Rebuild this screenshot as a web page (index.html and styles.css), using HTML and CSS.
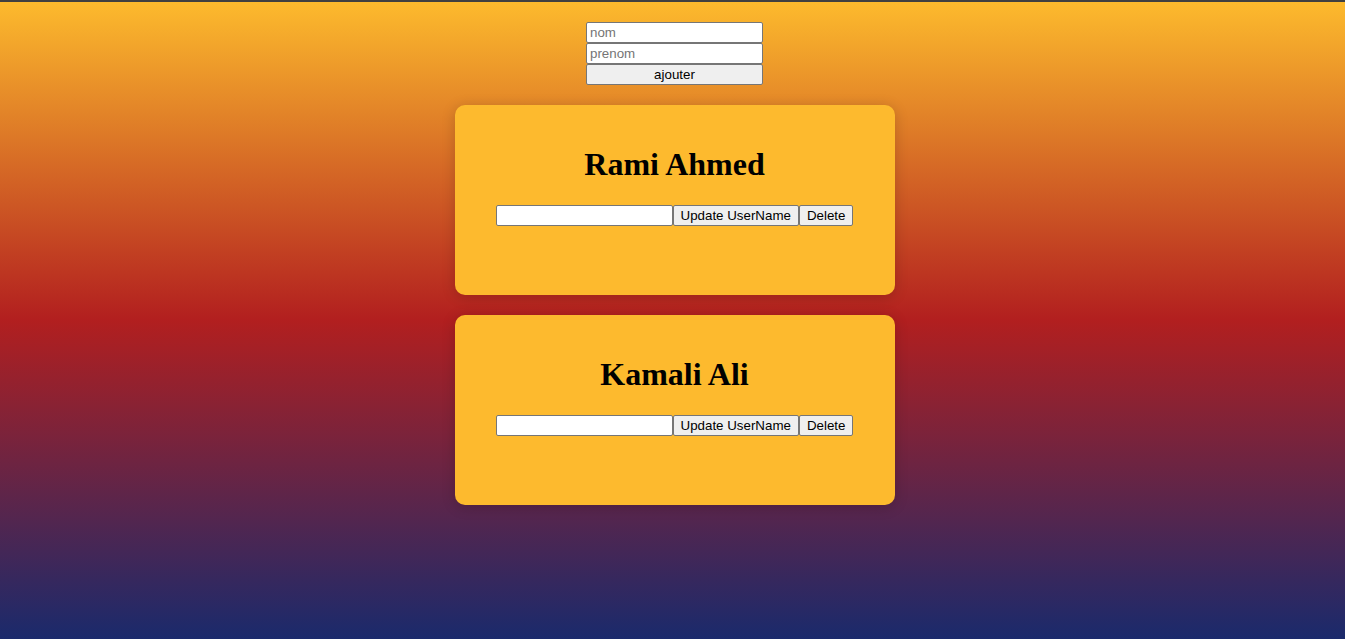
FILE: index.html
```html
<!DOCTYPE html>
<html>
<head>
<meta charset="utf-8">
<link rel="stylesheet" href="styles.css">
</head>
<body>
<div class="topbar"></div>
<main class="app">
  <form class="add-form">
    <input class="field" type="text" placeholder="nom">
    <input class="field" type="text" placeholder="prenom">
    <button class="btn btn-block" type="button">ajouter</button>
  </form>
  <section class="card">
    <h1 class="card-title">Rami Ahmed</h1>
    <div class="card-row"><input class="field" type="text"><button class="btn" type="button">Update UserName</button><button class="btn" type="button">Delete</button></div>
  </section>
  <section class="card">
    <h1 class="card-title">Kamali Ali</h1>
    <div class="card-row"><input class="field" type="text"><button class="btn" type="button">Update UserName</button><button class="btn" type="button">Delete</button></div>
  </section>
</main>
</body>
</html>
```
FILE: styles.css
```css
html, body {
  margin: 0;
  padding: 0;
  height: 100%;
}
body {
  background: linear-gradient(to bottom, #fdbb2d 0%, #b21f1f 50%, #1a2a6c 100%);
  font-family: "Liberation Serif", serif;
  overflow: hidden;
}
.topbar {
  height: 2px;
  background: #404040;
}
.app {
  display: flex;
  flex-direction: column;
  align-items: center;
  padding-top: 20px;
  padding-left: 4px;
}
.add-form {
  display: flex;
  flex-direction: column;
  width: 177px;
  margin-bottom: 20px;
}
.field {
  box-sizing: border-box;
  width: 177px;
  height: 21px;
  margin: 0;
  padding: 1px 3px;
  border: 1px solid #767676;
  border-radius: 2px;
  background: #fff;
  font-family: "Liberation Sans", Arial, sans-serif;
  font-size: 13.33px;
  color: #000;
}
.field::placeholder {
  color: #757575;
}
.btn {
  box-sizing: border-box;
  height: 21px;
  margin: 0;
  padding: 1px 7px;
  border: 1px solid #767676;
  border-radius: 2px;
  background: #efefef;
  font-family: "Liberation Sans", Arial, sans-serif;
  font-size: 13.33px;
  color: #000;
  line-height: 17px;
}
.btn-block {
  width: 177px;
}
.card {
  box-sizing: border-box;
  width: 440px;
  height: 190px;
  margin-bottom: 20px;
  padding: 20px;
  background: #fdba2e;
  border-radius: 10px;
  box-shadow: 0 2px 14px rgba(0, 0, 0, 0.18);
}
.card-title {
  margin: 21px 0 22px;
  font-family: "Liberation Serif", "Times New Roman", serif;
  font-size: 32px;
  font-weight: bold;
  line-height: 37px;
  text-align: center;
  color: #000;
}
.card-row {
  display: flex;
  justify-content: center;
}
```
